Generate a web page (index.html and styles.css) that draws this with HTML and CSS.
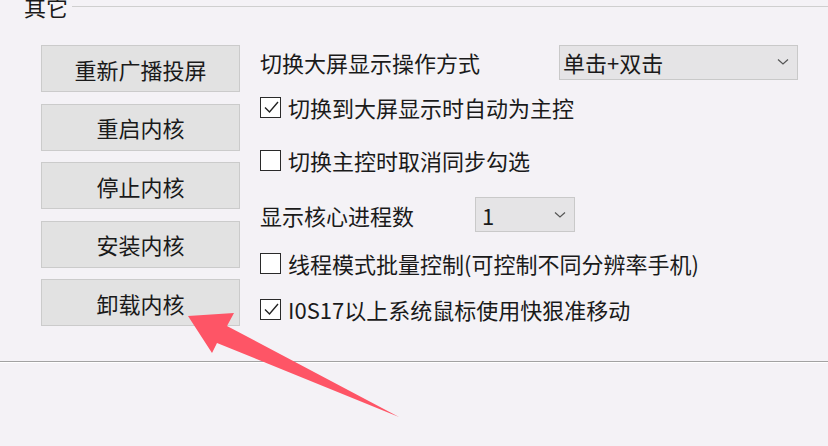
FILE: index.html
```html
<!DOCTYPE html>
<html lang="zh-CN">
<head>
    <meta charset="UTF-8">
    <title>其它设置</title>
    <link rel="stylesheet" href="styles.css">
</head>
<body>

    <div class="group">
        <!-- Group title -->
        <div class="group-head">
            <span class="group-title">其它</span>
            <span class="group-line"></span>
        </div>

        <div class="group-body">
            <!-- Buttons -->
            <div class="button-col">
                <button class="win-button">重新广播投屏</button>
                <button class="win-button">重启内核</button>
                <button class="win-button">停止内核</button>
                <button class="win-button">安装内核</button>
                <button class="win-button">卸载内核</button>
            </div>

            <!-- Options -->
            <div class="option-col">
                <div class="option-row">
                    <span class="label label-wide">切换大屏显示操作方式</span>
                    <div class="combo combo-wide">
                        <span>单击+双击</span>
                        <svg class="chevron" width="12" height="8" viewBox="0 0 12 8"><path d="M1 1.5 L6 6 L11 1.5" fill="none" stroke="#555" stroke-width="1.2"/></svg>
                    </div>
                </div>
                <div class="option-row">
                    <span class="check on"><svg width="18" height="18" viewBox="0 0 18 18"><path d="M3 9.5 L7.5 14 L16 4" fill="none" stroke="#222" stroke-width="1.4"/></svg></span>
                    <span class="label">切换到大屏显示时自动为主控</span>
                </div>
                <div class="option-row">
                    <span class="check"></span>
                    <span class="label">切换主控时取消同步勾选</span>
                </div>
                <div class="option-row">
                    <span class="label label-mid">显示核心进程数</span>
                    <div class="combo combo-small">
                        <span>1</span>
                        <svg class="chevron" width="12" height="8" viewBox="0 0 12 8"><path d="M1 1.5 L6 6 L11 1.5" fill="none" stroke="#555" stroke-width="1.2"/></svg>
                    </div>
                </div>
                <div class="option-row">
                    <span class="check"></span>
                    <span class="label">线程模式批量控制(可控制不同分辨率手机)</span>
                </div>
                <div class="option-row">
                    <span class="check on"><svg width="18" height="18" viewBox="0 0 18 18"><path d="M3 9.5 L7.5 14 L16 4" fill="none" stroke="#222" stroke-width="1.4"/></svg></span>
                    <span class="label">I0S17以上系统鼠标使用快狠准移动</span>
                </div>
            </div>
        </div>
    </div>

    <!-- Red pointer arrow over the dialog -->
    <svg class="pointer" width="828" height="446" viewBox="0 0 828 446">
        <polygon points="188,316 234,313 227,326 399,417 217,343 212,353" fill="#fe5566"/>
    </svg>

</body>
</html>
```

FILE: styles.css
```css
* {
    margin: 0;
    padding: 0;
    box-sizing: border-box;
}

body {
    width: 828px;
    height: 446px;
    overflow: hidden;
    position: relative;
    background-color: #f4f2f6;
    color: #1a1a1a;
    font-family: "Noto Sans CJK SC", "Noto Sans", sans-serif;
    font-size: 22px;
}

.group {
    margin-top: -5px;
    height: 367px;
    border-bottom: 1px solid #a2a2a2;
    box-shadow: 0 1px 0 #ffffff;
}

.group-head {
    display: flex;
    align-items: center;
    height: 22px;
    padding-left: 24px;
}

.group-title {
    line-height: 22px;
}

.group-line {
    flex: 1;
    height: 1px;
    margin-left: 4px;
    background-color: #cfcfcf;
}

.group-body {
    display: flex;
    padding: 23px 0 0 41px;
}

.button-col {
    display: flex;
    flex-direction: column;
    gap: 11.5px;
    width: 199px;
    margin-top: 5px;
}

.win-button {
    height: 47px;
    background-color: #e2e2e2;
    border: 1px solid #cbcbcb;
    font-family: inherit;
    font-size: 22px;
    color: #1a1a1a;
    line-height: 1;
}

.option-col {
    display: grid;
    grid-template-rows: 44px 46px 60px 49px 48px 44px;
    align-items: center;
    margin-left: 20px;
}

.option-row {
    display: flex;
    align-items: center;
}

.label {
    line-height: 26px;
    white-space: nowrap;
}

.label-wide {
    width: 299px;
}

.label-mid {
    width: 215px;
}

.check {
    display: flex;
    align-items: center;
    justify-content: center;
    width: 21px;
    height: 21px;
    margin-right: 7px;
    border: 1.5px solid #2a2a2a;
    background-color: #ffffff;
}

.combo {
    display: flex;
    align-items: center;
    justify-content: space-between;
    height: 35px;
    padding: 0 8px 0 3px;
    background-color: #e5e4e6;
    border: 1px solid #c9c9c9;
    line-height: 1;
}

.combo-wide {
    width: 239px;
}

.combo-small {
    width: 100px;
    padding-left: 6px;
}

.pointer {
    position: absolute;
    left: 0;
    top: 0;
    pointer-events: none;
}
```
